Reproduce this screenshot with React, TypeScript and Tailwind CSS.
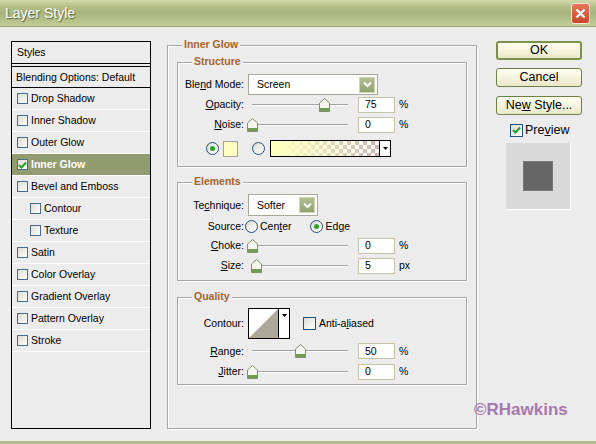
import type { ReactNode } from "react";

function Check({ on, small }: { on?: boolean; small?: boolean }) {
	return (
		<span
			className={
				small
					? "flex h-[11px] w-[11px] shrink-0 items-center justify-center border border-[#4b6a8a] bg-[linear-gradient(135deg,#dedbd2,#ffffff)]"
					: "flex h-[13px] w-[13px] shrink-0 items-center justify-center border border-[#1c5180] bg-[linear-gradient(135deg,#dcdcd4,#ffffff)]"
			}
		>
			{on && (
				<svg width="9" height="8" viewBox="0 0 9 8">
					<path d="M1 4 L3.5 6.5 L8 1.5" fill="none" stroke="#21a121" strokeWidth="2" />
				</svg>
			)}
		</span>
	);
}

function Radio({ on }: { on?: boolean }) {
	return (
		<span className="flex h-[13px] w-[13px] shrink-0 items-center justify-center rounded-full border border-[#2c4f7c] bg-[linear-gradient(135deg,#dcdcd4,#ffffff)]">
			{on && <span className="h-[5px] w-[5px] rounded-full bg-[#2aa52a]" />}
		</span>
	);
}

function Slider({ pct }: { pct: number }) {
	return (
		<div className="relative h-full w-[104px] shrink-0">
			<div className="absolute left-[4px] right-[4px] top-1/2 h-[2px] -translate-y-1/2 border-t border-[#a2a2a2] bg-white" />
			<svg
				className="absolute top-1/2 -mt-[7px]"
				style={{ left: 4 + pct * 96 - 5 }}
				width="11"
				height="14"
				viewBox="0 0 11 14"
			>
				<path d="M0.5 5 L5.5 0.5 L10.5 5 V13.5 H0.5 Z" fill="#f5f6ef" stroke="#7f8f70" />
				<rect x="1" y="10" width="9" height="3" fill="#6f9c50" />
			</svg>
		</div>
	);
}

function Field({ v }: { v: string }) {
	return (
		<div className="flex h-[16px] w-[37px] shrink-0 items-center border border-[#c3c3aa] bg-white pl-[6px]">
			{v}
		</div>
	);
}

function Select({ value, wide }: { value: string; wide?: boolean }) {
	return (
		<div
			className={
				wide
					? "flex h-[21px] w-[130px] items-center justify-between border border-[#a9a99a] bg-white pl-[8px] pr-[2px]"
					: "flex h-[22px] w-[70px] items-center justify-between border border-[#a9a99a] bg-white pl-[8px] pr-[2px]"
			}
		>
			<span>{value}</span>
			<span className="flex h-[16px] w-[16px] items-center justify-center border border-[#cfd6b8] bg-[linear-gradient(#b3bd90,#96a172)]">
				<svg width="9" height="7" viewBox="0 0 9 7">
					<path d="M1 1.5 L4.5 5 L8 1.5" fill="none" stroke="#ffffff" strokeWidth="2" />
				</svg>
			</span>
		</div>
	);
}

function Row({ h, label, children }: { h: string; label: ReactNode; children: ReactNode }) {
	return (
		<div className={`flex items-center ${h}`}>
			<div className="w-[66px] shrink-0 text-right">{label}</div>
			<div className="ml-[4px] flex h-full items-center">{children}</div>
		</div>
	);
}

function SliderRow({ h, label, pct, v, unit }: { h: string; label: ReactNode; pct: number; v: string; unit: string }) {
	return (
		<Row h={h} label={label}>
			<Slider pct={pct} />
			<div className="ml-[6px]">
				<Field v={v} />
			</div>
			<span className="ml-[4px]">{unit}</span>
		</Row>
	);
}

function Group({ title, h, children }: { title: string; h: string; children: ReactNode }) {
	return (
		<div className={`relative border border-[#a6a6a6] shadow-[inset_1px_1px_0_#fff,1px_1px_0_#fff] ${h}`}>
			<span className="absolute -top-[8px] left-[14px] bg-[#ececec] px-[2px] font-bold text-[#a8642a]">{title}</span>
			{children}
		</div>
	);
}

const styleRows: { name: string; indent?: boolean; active?: boolean }[] = [
	{ name: "Drop Shadow" },
	{ name: "Inner Shadow" },
	{ name: "Outer Glow" },
	{ name: "Inner Glow", active: true },
	{ name: "Bevel and Emboss" },
	{ name: "Contour", indent: true },
	{ name: "Texture", indent: true },
	{ name: "Satin" },
	{ name: "Color Overlay" },
	{ name: "Gradient Overlay" },
	{ name: "Pattern Overlay" },
	{ name: "Stroke" },
];

function Btn({ children, main }: { children: ReactNode; main?: boolean }) {
	return (
		<div
			className={
				main
					? "flex h-[19px] w-[86px] items-center justify-center rounded-[3px] border-2 border-[#7c9048] bg-[linear-gradient(#ffffef,#e9e8cc)] text-[12.5px]"
					: "flex h-[19px] w-[86px] items-center justify-center rounded-[3px] border border-[#6f7f48] bg-[linear-gradient(#ffffef,#e9e8cc)] text-[12.5px]"
			}
		>
			<span>{children}</span>
		</div>
	);
}

export default function App() {
	return (
		<div className="relative h-[444px] w-[596px] overflow-hidden bg-[#ececec] font-[family-name:'Liberation_Sans',Arial,sans-serif] text-[10.5px] leading-[13px] text-black">
			{/* title bar */}
			<div className="flex h-[27px] items-center justify-between border-b border-[#9aa274] bg-[linear-gradient(#d3d9ad,#b5bf89_25%,#a9b47d_50%,#bac48e_85%,#c3cb98)] pl-[5px] pr-[6px]">
				<span className="text-[14px] text-white [text-shadow:1px_1px_1px_#55603a]">Layer Style</span>
				<span className="flex h-[21px] w-[19px] items-center justify-center rounded-[3px] border border-[#f3e6d8] bg-[linear-gradient(#e3795b,#c9472b)]">
					<svg width="11" height="11" viewBox="0 0 11 11">
						<path d="M1.5 1.5 L9.5 9.5 M9.5 1.5 L1.5 9.5" stroke="#ffffff" strokeWidth="2.2" />
					</svg>
				</span>
			</div>

			<div className="flex h-[414px] pt-[14px]">
				{/* styles list */}
				<div className="ml-[11px] flex h-[388px] w-[140px] flex-col border border-black">
					<div className="flex h-[22px] shrink-0 items-center border-b border-black pl-[5px]">Styles</div>
					<div className="mt-[2px] flex h-[22px] shrink-0 items-center border-y border-black pl-[4px]">Blending Options: Default</div>
					{styleRows.map((r) => (
						<div
							key={r.name}
							className={`flex h-[22px] shrink-0 items-center gap-[3px] border-b border-white ${r.indent ? "pl-[18px]" : "pl-[5px]"} ${r.active ? "bg-[#939b70] font-bold text-white" : ""}`}
						>
							<Check small on={r.active} />
							<span>{r.name}</span>
						</div>
					))}
				</div>

				{/* main group */}
				<div className="ml-[16px] mt-[4px]">
					<Group title="Inner Glow" h="h-[384px] w-[310px] px-[9px] pt-[16px]">
						<Group title="Structure" h="h-[105px] pt-[11px]">
							<Row h="h-[21px]" label={<>Ble<u>n</u>d Mode:</>}>
								<Select wide value="Screen" />
							</Row>
							<SliderRow h="h-[19px]" label={<><u>O</u>pacity:</>} pct={0.75} v="75" unit="%" />
							<SliderRow h="h-[21px]" label={<><u>N</u>oise:</>} pct={0} v="0" unit="%" />
							<div className="mt-[5px] flex h-[17px] items-center pl-[28px]">
								<Radio on />
								<span className="ml-[4px] h-[16px] w-[15px] border border-[#a3a39a] bg-[#ffffc0]" />
								<span className="ml-[14px]">
									<Radio />
								</span>
								<span className="ml-[5px] flex h-[17px] w-[121px] border border-black">
									<span className="h-full flex-1 bg-[linear-gradient(to_right,#ffffc0_8%,rgba(255,255,192,0)_100%),repeating-conic-gradient(#c8b4b4_0_25%,#ffffff_0_50%)] bg-[length:100%_100%,8px_8px]" />
									<span className="flex w-[11px] items-center justify-center border-l border-black bg-white">
										<svg width="5" height="3" viewBox="0 0 5 3"><path d="M0 0 H5 L2.5 3 Z" fill="#000" /></svg>
									</span>
								</span>
							</div>
						</Group>

						<div className="mt-[15px]">
							<Group title="Elements" h="h-[99px] pt-[11px]">
								<Row h="h-[22px]" label={<>Te<u>c</u>hnique:</>}>
									<Select value="Softer" />
								</Row>
								<div className="flex h-[20px] items-center">
									<div className="w-[66px] shrink-0 text-right">Source:</div>
									<span className="ml-[1px]">
										<Radio />
									</span>
									<span className="ml-[2px]">
										Cen<u>t</u>er
									</span>
									<span className="ml-[18px]">
										<Radio on />
									</span>
									<span className="ml-[3px]">
										Ed<u>g</u>e
									</span>
								</div>
								<SliderRow h="h-[19px]" label={<><u>C</u>hoke:</>} pct={0} v="0" unit="%" />
								<SliderRow h="h-[21px]" label={<><u>S</u>ize:</>} pct={0.04} v="5" unit="px" />
							</Group>
						</div>

						<div className="mt-[16px]">
							<Group title="Quality" h="h-[88px] pt-[10px]">
								<Row h="h-[31px]" label="Contour:">
									<span className="flex h-[31px] w-[42px] border border-black bg-white">
										<svg className="flex-1" viewBox="0 0 29 29" preserveAspectRatio="none">
											<path d="M0 29 L29 0 V29 Z" fill="#aca89c" />
										</svg>
										<span className="flex w-[11px] justify-center border-l border-black pt-[5px]">
											<svg width="5" height="3" viewBox="0 0 5 3"><path d="M0 0 H5 L2.5 3 Z" fill="#000" /></svg>
										</span>
									</span>
									<span className="ml-[13px]">
										<Check />
									</span>
									<span className="ml-[3px]">
										Anti-a<u>l</u>iased
									</span>
								</Row>
								<div className="mt-[2px]">
									<SliderRow h="h-[20px]" label={<><u>R</u>ange:</>} pct={0.5} v="50" unit="%" />
									<SliderRow h="h-[21px]" label={<><u>J</u>itter:</>} pct={0} v="0" unit="%" />
								</div>
							</Group>
						</div>
					</Group>
				</div>

				{/* buttons */}
				<div className="ml-[19px] flex flex-col">
					<Btn main>OK</Btn>
					<div className="mt-[8px]">
						<Btn>Cancel</Btn>
					</div>
					<div className="mt-[9px]">
						<Btn>
							Ne<u>w</u> Style...
						</Btn>
					</div>
					<div className="ml-[14px] mt-[8px] flex h-[14px] items-center gap-[2px] text-[12.5px]">
						<Check on />
						<span>
							Pre<u>v</u>iew
						</span>
					</div>
					<div className="ml-[10px] mt-[6px] flex h-[67px] w-[65px] items-center justify-center border-b border-r border-white bg-[#d9d9d9]">
						<div className="h-[30px] w-[30px] border border-[#777777] bg-[#666666]" />
					</div>
				</div>
			</div>

			<div className="h-[3px] bg-[#b3bc89]" />

			<span className="absolute left-[474px] top-[403px] text-[17px] font-bold text-[#a679ac]">©RHawkins</span>
		</div>
	);
}
